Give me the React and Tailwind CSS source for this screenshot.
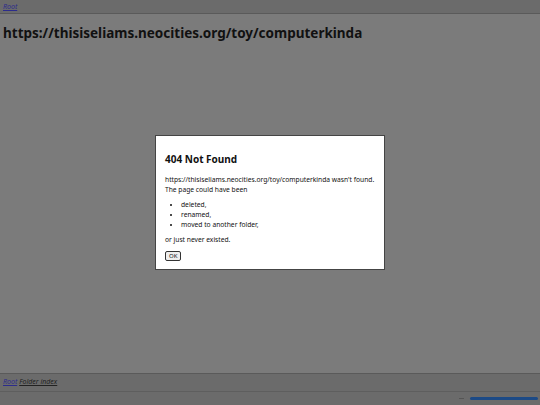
export default function App() {
  return (
    <div className="relative flex h-[405px] w-[540px] flex-col overflow-hidden bg-[#7b7b7b] font-['Noto_Sans',sans-serif]">
      <div className="flex h-[14px] items-center border-b border-[#5a5a5a] bg-[#6b6b6b] px-[3px]">
        <a className="text-[7px] italic leading-none text-[#2c2c8c] underline">Root</a>
      </div>
      <h1 className="px-[3px] pt-[11px] text-[13.5px] font-bold leading-tight text-[#111]">
        https://thisiseliams.neocities.org/toy/computerkinda
      </h1>
      <div className="flex flex-1 items-center justify-center">
        <div className="mt-[-9px] w-[230px] border border-[#444] bg-white pb-[8px] pl-[9px] pr-[6px] pt-[18px] text-[6.7px] leading-[10px] text-[#111]">
          <h2 className="text-[10px] font-bold leading-none">404 Not Found</h2>
          <p className="mt-[11px]">
            https://thisiseliams.neocities.org/toy/computerkinda wasn't found. The page could have been
          </p>
          <ul className="ml-[16px] mt-[5px] list-disc">
            <li>deleted,</li>
            <li>renamed,</li>
            <li>moved to another folder,</li>
          </ul>
          <p className="mt-[5px]">or just never existed.</p>
          <button className="mt-[6px] rounded-[2px] border border-[#333] bg-[#eee] px-[3px] text-[6px] leading-[8px]">
            OK
          </button>
        </div>
      </div>
      <div className="flex h-[18px] items-center gap-[2px] border-t border-[#5a5a5a] bg-[#6b6b6b] px-[3px] text-[7px] italic">
        <a className="text-[#2c2c8c] underline">Root</a>
        <a className="text-[#222] underline">Folder index</a>
      </div>
      <div className="flex h-[14px] items-center justify-end gap-[6px] border-t border-[#5e5e5e] bg-[#6b6b6b] pr-[2px]">
        <span className="h-[1px] w-[5px] bg-[#555]" />
        <span className="h-[3px] w-[68px] rounded-[2px] bg-[#1c4a86]" />
      </div>
    </div>
  );
}
